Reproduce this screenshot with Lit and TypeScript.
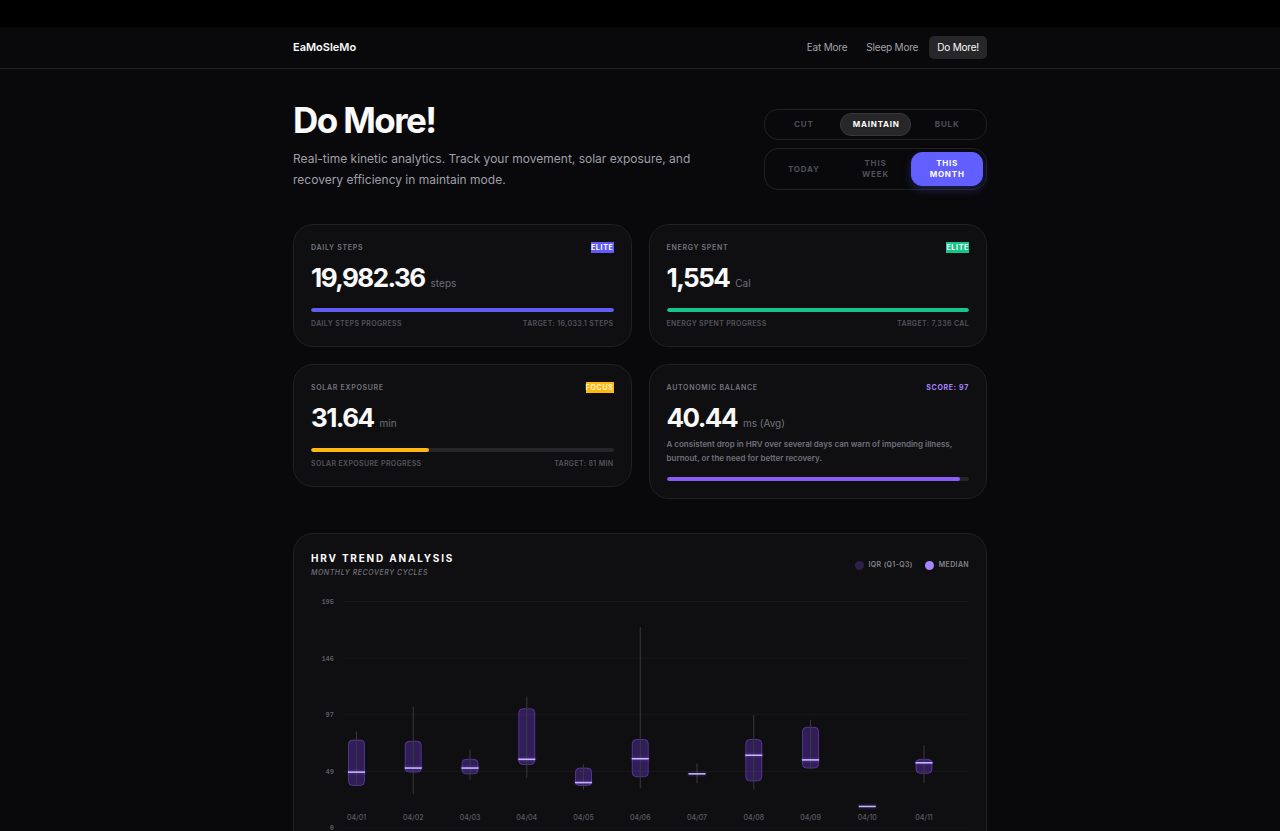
import { LitElement, html, svg, css, nothing } from "lit";
import { customElement, property, state } from "lit/decorators.js";
import { classMap } from "lit/directives/class-map.js";
import { styleMap } from "lit/directives/style-map.js";

interface Metric {
  label: string;
  value: string;
  unit: string;
  badge: string;
  tone: "indigo" | "emerald" | "amber" | "violet";
  percent: number;
  target?: string;
  note?: string;
}

interface Day {
  date: string;
  high: number;
  q3: number;
  median: number;
  q1: number;
  low: number;
}

const METRICS: Metric[] = [
  { label: "Daily Steps", value: "19,982.36", unit: "steps", badge: "Elite", tone: "indigo", percent: 100, target: "16,033.1 steps" },
  { label: "Energy Spent", value: "1,554", unit: "Cal", badge: "Elite", tone: "emerald", percent: 100, target: "7,336 Cal" },
  { label: "Solar Exposure", value: "31.64", unit: "min", badge: "Focus", tone: "amber", percent: 39, target: "81 min" },
  {
    label: "Autonomic Balance",
    value: "40.44",
    unit: "ms (Avg)",
    badge: "Score: 97",
    tone: "violet",
    percent: 97,
    note: "A consistent drop in HRV over several days can warn of impending illness, burnout, or the need for better recovery.",
  },
];

const DAYS: Day[] = [
  { date: "04/01", high: 83, q3: 75.5, median: 48, q1: 36.5, low: 36 },
  { date: "04/02", high: 104, q3: 74.5, median: 51.5, q1: 48, low: 29 },
  { date: "04/03", high: 67.5, q3: 59, median: 51.5, q1: 46.5, low: 41 },
  { date: "04/04", high: 113, q3: 102.5, median: 59, q1: 54.5, low: 43 },
  { date: "04/05", high: 54.5, q3: 51.5, median: 39, q1: 36.5, low: 33 },
  { date: "04/06", high: 172.5, q3: 76, median: 59.5, q1: 44, low: 34 },
  { date: "04/07", high: 55.5, q3: 46.5, median: 46.5, q1: 46.5, low: 38.5 },
  { date: "04/08", high: 97, q3: 76, median: 62.5, q1: 40.5, low: 33 },
  { date: "04/09", high: 93, q3: 86.5, median: 58.5, q1: 51.5, low: 51 },
  { date: "04/10", high: 18.5, q3: 18.5, median: 18.5, q1: 18.5, low: 18.5 },
  { date: "04/11", high: 71, q3: 59, median: 56, q1: 47, low: 38.5 },
];

@customElement("metric-card")
class MetricCard extends LitElement {
  @property({ attribute: false }) metric!: Metric;

  static styles = css`
    :host {
      display: block;
    }
    .card {
      box-sizing: border-box;
      padding: 17px;
      border: 1px solid #212124;
      border-radius: 20px;
      background: #0f0f11;
    }
    .top,
    .foot {
      display: flex;
      justify-content: space-between;
      align-items: center;
    }
    .label,
    .badge {
      margin: 0;
      font-size: 7px;
      line-height: 11px;
      font-weight: 600;
      letter-spacing: 0.1em;
      text-transform: uppercase;
      color: #74747c;
    }
    .badge {
      font-weight: 700;
      color: #fff;
    }
    .badge.indigo {
      background: #625bf6;
    }
    .badge.emerald {
      background: #14c68a;
    }
    .badge.amber {
      background: #fdb813;
      color: #fff3c4;
    }
    .badge.violet {
      color: #a684ff;
    }
    .reading {
      display: flex;
      align-items: baseline;
      gap: 6px;
      margin: 7px 0 1px;
      line-height: 36px;
    }
    .value {
      font-size: 26px;
      font-weight: 700;
      letter-spacing: -0.06em;
      color: #fafafa;
    }
    .unit {
      font-size: 10px;
      line-height: 12px;
      color: #71717b;
    }
    .note {
      margin: 0;
      font-size: 8px;
      line-height: 14px;
      font-weight: 600;
      color: #71717b;
    }
    .track {
      height: 4px;
      margin-top: 12px;
      border-radius: 2px;
      background: #262628;
      overflow: hidden;
    }
    .fill {
      height: 4px;
      border-radius: 2px;
    }
    .fill.indigo {
      background: #625bf6;
    }
    .fill.emerald {
      background: #14c68a;
    }
    .fill.amber {
      background: #fdb813;
    }
    .fill.violet {
      background: #8b5cf6;
    }
    .foot {
      margin-top: 7px;
      font-size: 7px;
      line-height: 10px;
      font-weight: 600;
      letter-spacing: 0.05em;
      text-transform: uppercase;
      color: #535359;
    }
  `;

  render() {
    const m = this.metric;
    return html`
      <article class="card">
        <div class="top">
          <h2 class="label">${m.label}</h2>
          <span class="badge ${m.tone}">${m.badge}</span>
        </div>
        <p class="reading"><span class="value">${m.value}</span><span class="unit">${m.unit}</span></p>
        ${m.note ? html`<p class="note">${m.note}</p>` : nothing}
        <div class="track" role="progressbar" aria-label=${`${m.label} progress`} aria-valuenow=${m.percent}>
          <div class="fill ${m.tone}" style=${styleMap({ width: `${m.percent}%` })}></div>
        </div>
        ${m.target
          ? html`<div class="foot"><span>${m.label} progress</span><span>Target: ${m.target}</span></div>`
          : nothing}
      </article>
    `;
  }
}

@customElement("segment-control")
class SegmentControl extends LitElement {
  @property({ attribute: false }) options: string[] = [];
  @property() label = "";
  @property() tone = "neutral";
  @property() value = "";

  static styles = css`
    :host {
      display: block;
    }
    .group {
      display: grid;
      grid-template-columns: repeat(3, 1fr);
      padding: 3px;
      border: 1px solid #212124;
      border-radius: 14px;
    }
    .option {
      box-sizing: border-box;
      min-width: 0;
      padding: 5px 12px;
      border: 1px solid transparent;
      border-radius: 11px;
      background: none;
      font: 700 8px/11px Inter, "Liberation Sans", sans-serif;
      letter-spacing: 0.1em;
      text-transform: uppercase;
      color: #4f4f56;
      cursor: pointer;
    }
    .option.active {
      color: #fff;
      background: #27272a;
      border-color: #38383c;
    }
    .accent .option.active {
      background: #615fff;
      border-color: #615fff;
      box-shadow: 0 4px 10px rgba(97, 95, 255, 0.25);
    }
  `;

  render() {
    return html`
      <div class=${classMap({ group: true, accent: this.tone === "accent" })} role="group" aria-label=${this.label}>
        ${this.options.map(
          (o) => html`<button
            type="button"
            class=${classMap({ option: true, active: o === this.value })}
            aria-pressed=${o === this.value ? "true" : "false"}
            @click=${() => (this.value = o)}
          >${o}</button>`
        )}
      </div>
    `;
  }
}

@customElement("hrv-chart")
class HrvChart extends LitElement {
  static styles = css`
    :host {
      display: block;
    }
    .chart {
      display: block;
      width: 100%;
      height: auto;
    }
    .grid {
      stroke: #18181b;
    }
    .tick {
      font: 700 7px "Liberation Mono", monospace;
      fill: #5c5c63;
      text-anchor: end;
    }
    .date {
      font: 500 7px Inter, "Liberation Sans", sans-serif;
      fill: #5c5c63;
      text-anchor: middle;
    }
    .wick {
      stroke: #3a3a3e;
    }
    .box {
      fill: #8040ff;
      fill-opacity: 0.3;
      stroke: #8b5cf6;
      stroke-opacity: 0.45;
    }
    .glow {
      fill: #8b5cf6;
      fill-opacity: 0.1;
    }
    .median {
      fill: #c8b4ff;
    }
  `;

  private y(value: number) {
    return 237 - (value / 195) * 227;
  }

  private day(d: Day, i: number) {
    const x = 45.5 + i * 56.75;
    const top = this.y(d.q3);
    const height = this.y(d.q1) - top;
    const mid = this.y(d.median);
    return svg`
      <g>
        ${height > 0 ? svg`<rect class="box" x=${x - 8} y=${top} width="16" height=${height} rx="4"></rect>` : nothing}
        <line class="wick" x1=${x} x2=${x} y1=${this.y(d.high)} y2=${this.y(d.low)}></line>
        <rect class="glow" x=${x - 10} y=${mid - 3} width="20" height="6" rx="3"></rect>
        <rect class="median" x=${x - 8.5} y=${mid - 0.8} width="17" height="1.6"></rect>
        <text class="date" x=${x} y="229">${d.date}</text>
      </g>
    `;
  }

  render() {
    return html`
      <svg class="chart" viewBox="0 0 658 244" role="img" aria-label="HRV box plot by day">
        ${[195, 146, 97, 49, 0].map((t, i) => {
          const y = 10.5 + i * 56.6;
          return svg`
            <line class="grid" x1="32" x2="658" y1=${y} y2=${y}></line>
            <text class="tick" x="23" y=${y + 2.5}>${t}</text>
          `;
        })}
        ${DAYS.map((d, i) => this.day(d, i))}
      </svg>
    `;
  }
}

@customElement("app-root")
class AppRoot extends LitElement {
  @state() private page = "Do More!";

  static styles = css`
    :host {
      display: block;
      min-height: 100vh;
      background: #09090b;
      color: #fafafa;
      font-family: Inter, "Liberation Sans", sans-serif;
    }
    .strip {
      height: 27px;
      background: #000;
    }
    .bar {
      border-bottom: 1px solid #212124;
    }
    .wrap {
      box-sizing: border-box;
      max-width: 730px;
      margin: 0 auto;
      padding: 0 18px;
    }
    .nav {
      display: flex;
      justify-content: space-between;
      align-items: center;
      padding-top: 9px;
      padding-bottom: 9px;
    }
    .brand {
      font-size: 11px;
      line-height: 23px;
      font-weight: 600;
      color: #fafafa;
      text-decoration: none;
    }
    .links {
      display: flex;
      gap: 3px;
    }
    .link {
      padding: 0 8px;
      border-radius: 5px;
      font-size: 10px;
      line-height: 23px;
      letter-spacing: -0.02em;
      color: #a3a3ab;
      text-decoration: none;
    }
    .link.current {
      background: #27272a;
      color: #fafafa;
    }
    .hero {
      display: flex;
      justify-content: space-between;
      align-items: flex-end;
      gap: 36px;
      padding-top: 32px;
    }
    .intro {
      flex: 1;
      max-width: 430px;
    }
    .title {
      margin: 0;
      font-size: 35px;
      line-height: 39px;
      font-weight: 700;
      letter-spacing: -0.045em;
    }
    .lead {
      margin: 8px 0 0;
      font-size: 12px;
      line-height: 21px;
      color: #9f9fa9;
    }
    .filters {
      display: grid;
      gap: 8px;
      width: 223px;
    }
    .cards {
      display: grid;
      grid-template-columns: 1fr 1fr;
      align-items: start;
      gap: 17px;
      margin-top: 34px;
    }
    .panel {
      margin: 34px 0;
      padding: 17px;
      border: 1px solid #212124;
      border-radius: 20px;
      background: #0f0f11;
    }
    .panel-head {
      display: flex;
      justify-content: space-between;
      align-items: center;
      margin-bottom: 12px;
    }
    .panel-title {
      margin: 0;
      font-size: 10px;
      line-height: 14px;
      font-weight: 700;
      letter-spacing: 0.18em;
      text-transform: uppercase;
    }
    .panel-sub {
      margin: 2px 0 0;
      font-size: 7px;
      line-height: 12px;
      font-style: italic;
      font-weight: 500;
      letter-spacing: 0.08em;
      text-transform: uppercase;
      color: #71717b;
    }
    .legend {
      display: flex;
      gap: 12px;
      margin: 0;
      padding: 0;
      list-style: none;
      font-size: 7px;
      line-height: 10px;
      font-weight: 600;
      letter-spacing: 0.05em;
      text-transform: uppercase;
      color: #85858d;
    }
    .key {
      display: flex;
      align-items: center;
      gap: 5px;
    }
    .dot {
      width: 9px;
      height: 9px;
      border-radius: 50%;
      background: #a684ff;
    }
    .dot.iqr {
      background: #2d2148;
    }
  `;

  render() {
    return html`
      <div class="strip"></div>
      <header class="bar">
        <div class="wrap nav">
          <a class="brand" href="#">EaMoSleMo</a>
          <nav class="links">
            ${["Eat More", "Sleep More", "Do More!"].map(
              (name) => html`<a
                href="#"
                class=${classMap({ link: true, current: name === this.page })}
                @click=${() => (this.page = name)}
              >${name}</a>`
            )}
          </nav>
        </div>
      </header>
      <main class="wrap">
        <section class="hero">
          <div class="intro">
            <h1 class="title">Do More!</h1>
            <p class="lead">
              Real-time kinetic analytics. Track your movement, solar exposure, and recovery efficiency in maintain mode.
            </p>
          </div>
          <div class="filters">
            <segment-control label="Goal" .options=${["Cut", "Maintain", "Bulk"]} value="Maintain"></segment-control>
            <segment-control
              label="Period"
              tone="accent"
              .options=${["Today", "This Week", "This Month"]}
              value="This Month"
            ></segment-control>
          </div>
        </section>
        <section class="cards">${METRICS.map((m) => html`<metric-card .metric=${m}></metric-card>`)}</section>
        <section class="panel">
          <div class="panel-head">
            <div>
              <h2 class="panel-title">HRV Trend Analysis</h2>
              <p class="panel-sub">Monthly recovery cycles</p>
            </div>
            <ul class="legend">
              <li class="key"><span class="dot iqr"></span>IQR (Q1-Q3)</li>
              <li class="key"><span class="dot"></span>Median</li>
            </ul>
          </div>
          <hrv-chart></hrv-chart>
        </section>
      </main>
    `;
  }
}
